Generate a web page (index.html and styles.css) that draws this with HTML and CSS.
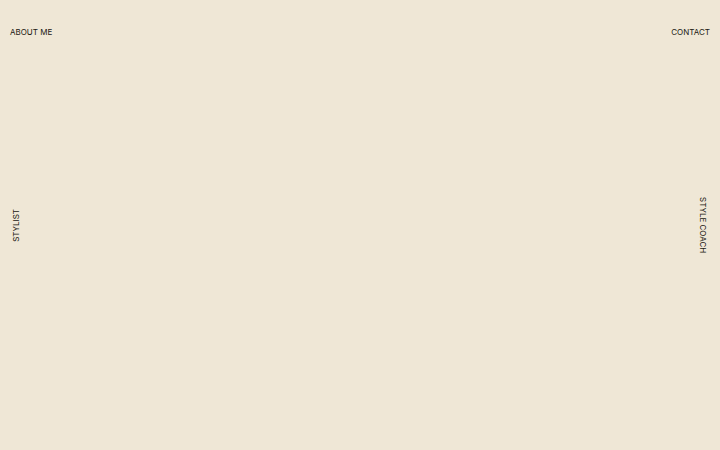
FILE: index.html
```html
<!DOCTYPE html>
<html lang="en">
<head>
<meta charset="utf-8">
<title>Stylist</title>
<link rel="stylesheet" href="styles.css">
</head>
<body>
<div class="page">
  <header class="topbar">
    <a class="nav-link" href="#">ABOUT ME</a>
    <a class="nav-link" href="#">CONTACT</a>
  </header>
  <main class="middle">
    <div class="side side-left"><span class="side-label label-up">STYLIST</span></div>
    <div class="center"></div>
    <div class="side side-right"><span class="side-label label-down">STYLE COACH</span></div>
  </main>
  <footer class="bottom"></footer>
</div>
</body>
</html>
```
FILE: styles.css
```css
html, body {
  margin: 0;
  padding: 0;
  height: 100%;
}
body {
  background: #efe7d6;
  color: #1a1712;
  font-family: Inter, "Liberation Sans", sans-serif;
  font-size: 8px;
}
.page {
  height: 100vh;
  display: grid;
  grid-template-rows: 62px 1fr 62px;
}
.topbar {
  display: flex;
  justify-content: space-between;
  align-items: center;
  padding: 2px 10px 0;
}
.nav-link {
  color: inherit;
  text-decoration: none;
  line-height: 11px;
}
.middle {
  display: grid;
  grid-template-columns: auto 1fr auto;
  align-items: center;
}
.side {
  display: flex;
  align-items: center;
}
.side-left { padding-left: 11px; }
.side-right { padding-right: 12px; }
.side-label {
  writing-mode: vertical-rl;
  line-height: 11px;
}
.label-up { transform: rotate(180deg); }
```
